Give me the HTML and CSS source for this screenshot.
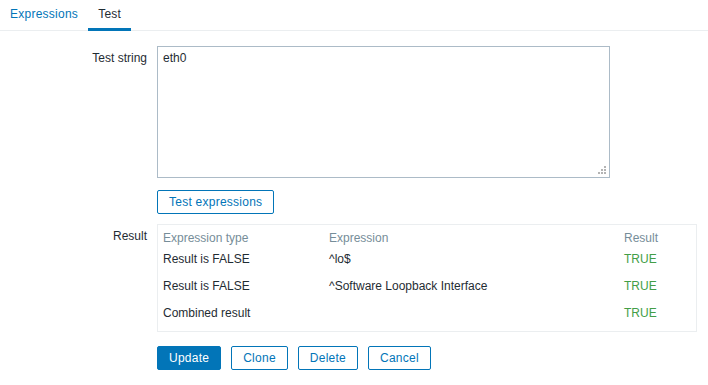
FILE: index.html
```html
<!DOCTYPE html>
<html lang="en">
<head>
  <meta charset="UTF-8" />
  <title>Regular expression</title>
  <link rel="stylesheet" href="styles.css">
</head>
<body>

  <ul class="tabs">
    <li><a href="#">Expressions</a></li>
    <li class="active"><a href="#">Test</a></li>
  </ul>

  <div class="form-list">
    <div class="row">
      <label class="row-label" for="testString">Test string</label>
      <div class="row-field">
        <div class="textarea-wrap">
          <textarea id="testString">eth0</textarea>
          <span class="grip"></span>
        </div>
      </div>
    </div>

    <div class="row row-test">
      <div class="row-label"></div>
      <div class="row-field">
        <button class="btn-alt">Test expressions</button>
      </div>
    </div>

    <div class="row row-result">
      <div class="row-label">Result</div>
      <div class="row-field">
        <div class="table-wrap">
          <table class="result-table">
            <colgroup>
              <col style="width: 166px">
              <col style="width: 295px">
              <col>
            </colgroup>
            <thead>
              <tr>
                <th>Expression type</th>
                <th>Expression</th>
                <th>Result</th>
              </tr>
            </thead>
            <tbody>
              <tr>
                <td>Result is FALSE</td>
                <td>^lo$</td>
                <td class="green">TRUE</td>
              </tr>
              <tr>
                <td>Result is FALSE</td>
                <td>^Software Loopback Interface</td>
                <td class="green">TRUE</td>
              </tr>
              <tr>
                <td>Combined result</td>
                <td></td>
                <td class="green">TRUE</td>
              </tr>
            </tbody>
          </table>
        </div>
      </div>
    </div>

    <div class="row row-buttons">
      <div class="row-label"></div>
      <div class="row-field buttons">
        <button class="btn-main">Update</button>
        <button class="btn-alt">Clone</button>
        <button class="btn-alt">Delete</button>
        <button class="btn-alt">Cancel</button>
      </div>
    </div>
  </div>

</body>
</html>
```

FILE: styles.css
```css
body {
  margin: 0;
  background-color: #fff;
  color: #1f2c33;
  font-family: "Liberation Sans", Arial, sans-serif;
  font-size: 12px;
  line-height: 14px;
}

/* tabs */

.tabs {
  display: flex;
  list-style: none;
  margin: 0;
  padding: 0;
  height: 30px;
  border-bottom: 1px solid #ebeef0;
}

.tabs li {
  margin-bottom: -1px;
  border-bottom: 3px solid transparent;
}

.tabs li.active {
  border-bottom-color: #0275b8;
}

.tabs a {
  display: block;
  padding: 1px 10px 0;
  line-height: 27px;
  letter-spacing: 0.25px;
  color: #0275b8;
  text-decoration: none;
}

.tabs li.active a {
  color: #1f2c33;
}

/* form */

.form-list {
  margin-top: 15px;
}

.row {
  display: flex;
}

.row-label {
  width: 157px;
  padding: 5px 10px 0 0;
  box-sizing: border-box;
  text-align: right;
  flex-shrink: 0;
}

.row-test {
  margin-top: 12px;
}

.row-result {
  margin-top: 10px;
}

.row-buttons {
  margin-top: 14px;
}

.textarea-wrap {
  position: relative;
  width: 453px;
  height: 132px;
}

textarea {
  display: block;
  width: 100%;
  height: 100%;
  box-sizing: border-box;
  margin: 0;
  padding: 4px 5px;
  border: 1px solid #acbbc7;
  border-radius: 0;
  resize: none;
  color: #1f2c33;
  font-family: "Liberation Sans", Arial, sans-serif;
  font-size: 12px;
  line-height: 14px;
  outline: none;
}

/* resize grip dots */
.grip {
  position: absolute;
  right: 4px;
  bottom: 4px;
  width: 2px;
  height: 2px;
  background: #b4b4b4;
  box-shadow: -3px 0 #b4b4b4, -6px 0 #b4b4b4, 0 -3px #b4b4b4, -3px -3px #b4b4b4, 0 -6px #b4b4b4;
}

/* buttons */

button {
  height: 24px;
  box-sizing: border-box;
  margin: 0;
  padding: 0 11px;
  border: 1px solid #0275b8;
  border-radius: 2px;
  font-family: "Liberation Sans", Arial, sans-serif;
  font-size: 12px;
  line-height: 22px;
  letter-spacing: 0.25px;
  cursor: pointer;
}

.btn-main {
  background-color: #0275b8;
  color: #fff;
}

.btn-alt {
  background-color: #fff;
  color: #0275b8;
}

.buttons {
  display: flex;
  gap: 10px;
}

/* result table */

.table-wrap {
  width: 540px;
  box-sizing: border-box;
  border: 1px solid #ebeef0;
  padding-bottom: 5px;
}

.result-table {
  width: 100%;
  border-collapse: collapse;
  table-layout: fixed;
}

.result-table th {
  padding: 6px 5px 1px;
  font-weight: normal;
  text-align: left;
  color: #768d99;
}

.result-table td {
  padding: 7px 5px 6px;
  text-align: left;
  white-space: nowrap;
}

.result-table tbody tr:first-child td {
  padding-top: 6px;
}

.green {
  color: #429e47;
}
```
